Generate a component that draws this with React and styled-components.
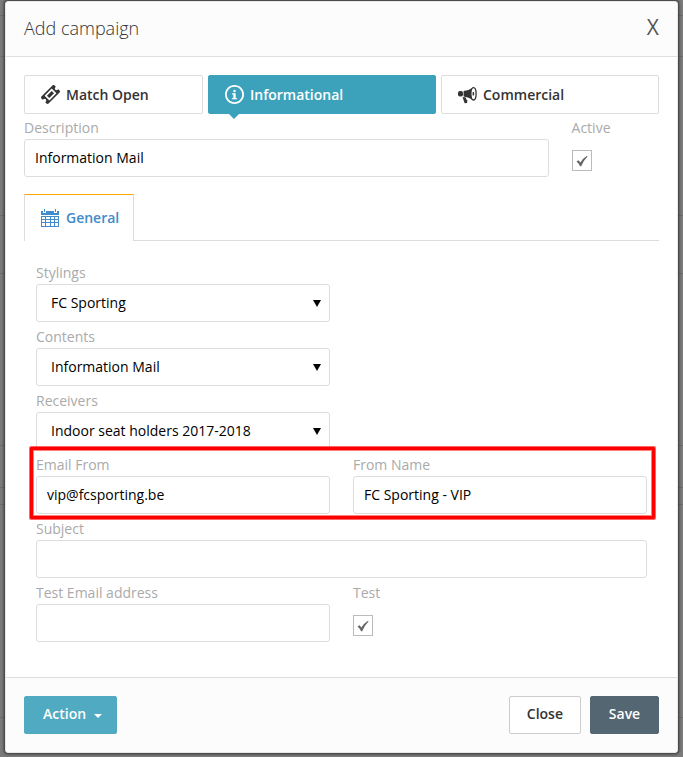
import React, { useState } from "react"
import styled, { createGlobalStyle } from "styled-components"
import { ImTicket, ImInfo } from "react-icons/im"

const svgUrl = svg => `url("data:image/svg+xml,${encodeURIComponent(svg)}")`

const arrow = svgUrl(
  '<svg xmlns="http://www.w3.org/2000/svg" width="8" height="8" viewBox="0 0 8 8"><path d="M0 1h8L4 8z" fill="#000"/></svg>'
)
const tick = svgUrl(
  '<svg xmlns="http://www.w3.org/2000/svg" width="12" height="12" viewBox="0 0 12 12"><path d="M.5 6.6 2.6 5.2 4.4 7.6Q7 3.200 11 .8L11.500 1.500Q7.800 5.200 5.200 11.200L4 11.200Q2.600 8.400.5 6.600z" fill="#666"/></svg>'
)

const GlobalStyle = createGlobalStyle`
  * {
    box-sizing: border-box;
  }
  body {
    margin: 0;
    background: #7b7b7b;
    font-family: "Open Sans", sans-serif;
    font-size: 14px;
    line-height: 20px;
    color: #333;
  }
  button, input, select {
    font: inherit;
    color: inherit;
  }
`

const line = "linear-gradient(#6e6e6e, #6e6e6e)"

const Backdrop = styled.div`
  min-height: 100vh;
  padding: 1px 5px 4px;
  background-color: #7b7b7b;
  background-image: ${[line, line, line, line, line, line, line, line].join(", ")};
  background-size: 100% 1px;
  background-repeat: no-repeat;
  background-position: 0 15px, 0 56px, 0 215px, 0 273px, 0 445px, 0 487px, 0 504px, 0 717px;
`

const Modal = styled.section`
  background: white;
  border: 1px solid #e8e8e8;
  border-radius: 3px;
  box-shadow: 0 0 3px 1px rgba(0, 0, 0, 0.6);
`

const Header = styled.header`
  display: flex;
  justify-content: space-between;
  align-items: center;
  height: 55px;
  padding: 0 18px 2px;
  background: #fcfcfc;
  border-bottom: 1px solid #e0e0e0;
  border-radius: 3px 3px 0 0;
`

const Title = styled.h1`
  margin: 0;
  font-size: 18px;
  font-weight: 300;
`

const CloseIcon = styled.button`
  padding: 0 0 2px;
  border: none;
  background: none;
  color: #555;
  font-size: 21px;
  cursor: pointer;
`

const Body = styled.div`
  padding: 18px 18px 35px;
`

const Types = styled.div`
  display: grid;
  grid-template-columns: 179fr 228fr 218fr;
  gap: 5px;
`

const TypeButton = styled.button`
  position: relative;
  display: flex;
  align-items: center;
  gap: 6px;
  height: 39px;
  padding: 0 16px;
  border: 1px solid ${props => (props.$active ? "#3ca2bc" : "#ddd")};
  border-radius: 2px;
  background: ${props => (props.$active ? "#3ca2bc" : "white")};
  color: ${props => (props.$active ? "white" : "#333")};
  font-weight: 600;
  cursor: pointer;

  &::after {
    content: "";
    display: ${props => (props.$active ? "block" : "none")};
    position: absolute;
    top: 100%;
    left: 19px;
    border: 6px solid transparent;
    border-top-color: #3ca2bc;
    border-bottom: none;
  }
`

const TopRow = styled.div`
  display: grid;
  grid-template-columns: 6fr 1fr;
  gap: 23px;
  margin-bottom: 17px;
`

const TabBar = styled.div`
  display: flex;
  border-bottom: 1px solid #ddd;
`

const Tab = styled.button`
  display: flex;
  align-items: center;
  gap: 6px;
  height: 47px;
  margin-bottom: -1px;
  padding: 0 14px 1px 15px;
  border: 1px solid #ddd;
  border-top: 1px solid #ffa800;
  border-bottom: none;
  background: white;
  color: #428bca;
  font-weight: 600;
  cursor: pointer;
`

const Form = styled.form`
  display: grid;
  grid-template-columns: 1fr 1fr;
  gap: 1px 23px;
  padding: 18px 12px 0;
`

const Field = styled.div`
  grid-column: ${props => (props.$wide ? "1 / -1" : "auto")};
  display: flex;
  flex-direction: column;
`

const HalfRow = styled(Field)`
  grid-column: 1;
`

const Label = styled.label`
  padding: 4px 0 1px;
  color: #aaa;
`

const Input = styled.input`
  width: 100%;
  height: 38px;
  padding: 0 10px 2px;
  border: 1px solid #ddd;
  border-radius: 3px;
  background: white;
  color: #000;
`

const Select = styled.select`
  appearance: none;
  width: 100%;
  height: 38px;
  padding: 0 24px 0 14px;
  border: 1px solid #ddd;
  border-radius: 3px;
  background: white ${arrow} no-repeat right 8px center;
  color: #000;
`

const Checkbox = styled.input`
  appearance: none;
  width: 20px;
  height: 21px;
  margin: 11px 0 0;
  border: 1px solid #bbb;
  background: white;

  &:checked {
    background: white ${tick} no-repeat center;
  }
`

const Highlight = styled.div`
  grid-column: 1 / -1;
  position: relative;
  display: grid;
  grid-template-columns: 1fr 1fr;
  column-gap: 23px;

  &::after {
    content: "";
    position: absolute;
    inset: -4px -8px -5px -6px;
    border: 3px solid #f00;
    border-radius: 1px;
    box-shadow: 0 0 0 1px rgba(255, 0, 0, 0.6), inset 0 0 0 1px rgba(255, 0, 0, 0.5);
    pointer-events: none;
  }
`

const Footer = styled.footer`
  display: flex;
  gap: 9px;
  padding: 18px;
  background: #fcfcfc;
  border-top: 1px solid #ddd;
  border-radius: 0 0 3px 3px;
`

const Button = styled.button`
  height: 38px;
  min-width: 69px;
  padding: 0 17px 2px;
  border: 1px solid ${props => props.$border || props.$color};
  border-radius: 2px;
  background: ${props => props.$color};
  color: ${props => (props.$border ? "#333" : "white")};
  font-weight: 600;
  cursor: pointer;
`

const ActionButton = styled(Button)`
  display: flex;
  align-items: center;
  gap: 8px;
  margin-right: auto;
  padding-left: 18px;
  padding-right: 14px;
`

const Caret = styled.span`
  margin-top: 4px;
  border: 4px solid transparent;
  border-top-color: white;
  border-bottom: none;
`

const CalendarIcon = () => (
  <svg width="20" height="20" viewBox="0 0 20 20" fill="#428bca" aria-hidden="true">
    <path d="M1 3h2v2h3V3h8v2h3V3h2v4H1z" />
    <path d="M4 1h1v3H4zM15 1h1v3h-1z" />
    <path
      fillRule="evenodd"
      d="M1 8h18v11H1zM2 9v2h3V9zM6 9v2h4V9zM11 9v2h3V9zM15 9v2h3V9zM2 12v2h3v-2zM6 12v2h4v-2zM11 12v2h3v-2zM15 12v2h3v-2zM2 15v3h3v-3zM6 15v3h4v-3zM11 15v3h3v-3zM15 15v3h3v-3z"
    />
  </svg>
)

const MegaphoneIcon = ({ size }) => (
  <svg width={size} height={size} viewBox="0 0 19 19" fill="currentColor" aria-hidden="true">
    <rect x="0" y="6" width="5" height="5.500" rx="2" />
    <path d="M5.600 6Q11 5.500 15 2.500V15Q11 12 5.600 11.500z" />
    <path d="M4.500 12.300h3l.8 2.200 1 .6-.2 2.900-2.400.2z" />
    <ellipse cx="15.500" cy="8.800" rx="2.600" ry="6.200" fill="white" stroke="currentColor" strokeWidth="1.300" />
    <path d="M14.600 7h1.200q1 1.800 0 3.600h-1.200z" />
  </svg>
)

const types = [
  { name: "Match Open", Icon: ImTicket },
  { name: "Informational", Icon: ImInfo },
  { name: "Commercial", Icon: MegaphoneIcon }
]

const App = () => {
  const [type, setType] = useState("Informational")
  const [campaign, setCampaign] = useState({
    description: "Information Mail",
    active: true,
    emailFrom: "vip@fcsporting.be",
    fromName: "FC Sporting - VIP",
    subject: "",
    testEmail: "",
    test: true
  })

  const handleChange = event => {
    const { name, value, checked, type: kind } = event.target
    setCampaign({ ...campaign, [name]: kind === "checkbox" ? checked : value })
  }

  const textInput = name => (
    <Input id={name} name={name} value={campaign[name]} onChange={handleChange} />
  )
  const checkbox = name => (
    <Checkbox
      type="checkbox"
      id={name}
      name={name}
      checked={campaign[name]}
      onChange={handleChange}
    />
  )

  return (
    <>
      <GlobalStyle />
      <Backdrop>
        <Modal role="dialog" aria-labelledby="title">
          <Header>
            <Title id="title">Add campaign</Title>
            <CloseIcon type="button">X</CloseIcon>
          </Header>
          <Body>
            <Types>
              {types.map(({ name, Icon }) => (
                <TypeButton
                  key={name}
                  type="button"
                  $active={name === type}
                  onClick={() => setType(name)}
                >
                  <Icon size={19} />
                  {name}
                </TypeButton>
              ))}
            </Types>
            <TopRow>
              <Field>
                <Label htmlFor="description">Description</Label>
                {textInput("description")}
              </Field>
              <Field>
                <Label htmlFor="active">Active</Label>
                {checkbox("active")}
              </Field>
            </TopRow>
            <TabBar>
              <Tab type="button">
                <CalendarIcon />
                General
              </Tab>
            </TabBar>
            <Form>
              <HalfRow>
                <Label htmlFor="stylings">Stylings</Label>
                <Select id="stylings">
                  <option>FC Sporting</option>
                </Select>
              </HalfRow>
              <HalfRow>
                <Label htmlFor="contents">Contents</Label>
                <Select id="contents">
                  <option>Information Mail</option>
                </Select>
              </HalfRow>
              <HalfRow>
                <Label htmlFor="receivers">Receivers</Label>
                <Select id="receivers">
                  <option>Indoor seat holders 2017-2018</option>
                </Select>
              </HalfRow>
              <Highlight>
                <Field>
                  <Label htmlFor="emailFrom">Email From</Label>
                  {textInput("emailFrom")}
                </Field>
                <Field>
                  <Label htmlFor="fromName">From Name</Label>
                  {textInput("fromName")}
                </Field>
              </Highlight>
              <Field $wide>
                <Label htmlFor="subject">Subject</Label>
                {textInput("subject")}
              </Field>
              <Field>
                <Label htmlFor="testEmail">Test Email address</Label>
                {textInput("testEmail")}
              </Field>
              <Field>
                <Label htmlFor="test">Test</Label>
                {checkbox("test")}
              </Field>
            </Form>
          </Body>
          <Footer>
            <ActionButton type="button" $color="#50aac2">
              Action
              <Caret />
            </ActionButton>
            <Button type="button" $color="white" $border="#ccc">
              Close
            </Button>
            <Button type="button" $color="#546672">
              Save
            </Button>
          </Footer>
        </Modal>
      </Backdrop>
    </>
  )
}

export default App
